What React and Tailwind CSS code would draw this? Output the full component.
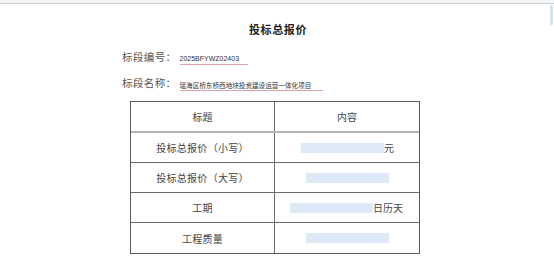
export default function App() {
  const rows = [
    { label: "投标总报价（小写）", offset: "ml-[26px]", unit: "元" },
    { label: "投标总报价（大写）", offset: "ml-[31px]", unit: "" },
    { label: "工期", offset: "ml-[15px]", unit: "日历天" },
    { label: "工程质量", offset: "ml-[31px]", unit: "" },
  ];

  return (
    <div
      className="relative w-[554px] h-[266px] overflow-hidden bg-white"
      style={{ fontFamily: '"Noto Sans CJK SC", "Noto Sans", sans-serif' }}
    >
      {/* top rule */}
      <div className="h-[3px] bg-[#f4f4f4]" />
      <div className="h-px bg-[#c9ccd1]" />
      {/* scrollbar thumb at the right edge */}
      <div className="absolute right-[1px] top-[5px] w-[3px] h-[20px] bg-[#d3e4f3]" />

      <div className="flex flex-col">
        <div className="mt-[17px] flex justify-center">
          <span className="ml-[2px] text-[11px] leading-[16px] font-bold tracking-[0.6px] text-[#222]" style={{ fontFamily: '"Noto Sans CJK SC", serif' }}>
            投标总报价
          </span>
        </div>

        <div className="mt-[12px] ml-[122px] flex items-end">
          <span className="text-[10.5px] leading-[16px] tracking-[0.4px] text-[#555]">标段编号：</span>
          <span className="ml-[3px] w-[68px] border-b border-[#e2a1a8] text-[7px] leading-[10px] text-[#333]" style={{ fontFamily: '"Liberation Sans", sans-serif' }}>
            2025BFYWZ02403
          </span>
        </div>

        <div className="mt-[10px] ml-[122px] flex items-end">
          <span className="text-[10.5px] leading-[16px] tracking-[0.4px] text-[#555]">标段名称：</span>
          <span className="ml-[3px] w-[143px] border-b border-[#e2a1a8] text-[6.6px] leading-[10px] text-[#333] whitespace-nowrap">
            瑶海区桥东桥西地块投资建设运营一体化项目
          </span>
        </div>

        <div className="mt-[10px] ml-[130px] w-[290px] border-[1.5px] border-[#5a5a5a]">
          <div className="flex h-[31px] border-b-2 border-[#b5b5b5]">
            <div className="w-[144px] border-r border-[#6a6a6a] flex items-center justify-center text-[10px] text-[#444]">
              标题
            </div>
            <div className="flex-1 flex items-center justify-center text-[10px] text-[#444]">内容</div>
          </div>
          {rows.map((r, i) => (
            <div
              key={r.label}
              className={`flex h-[30px] ${i < rows.length - 1 ? "border-b border-[#6a6a6a]" : ""}`}
            >
              <div className="w-[144px] border-r border-[#6a6a6a] flex items-center justify-center text-[10px] tracking-[0.3px] text-[#444]">
                {r.label}
              </div>
              <div className="flex-1 flex items-center">
                <div className={`${r.offset} w-[83px] h-[10px] bg-[#dde9f6]`} />
                {r.unit && <span className="text-[10px] text-[#444]">{r.unit}</span>}
              </div>
            </div>
          ))}
        </div>
      </div>
    </div>
  );
}
